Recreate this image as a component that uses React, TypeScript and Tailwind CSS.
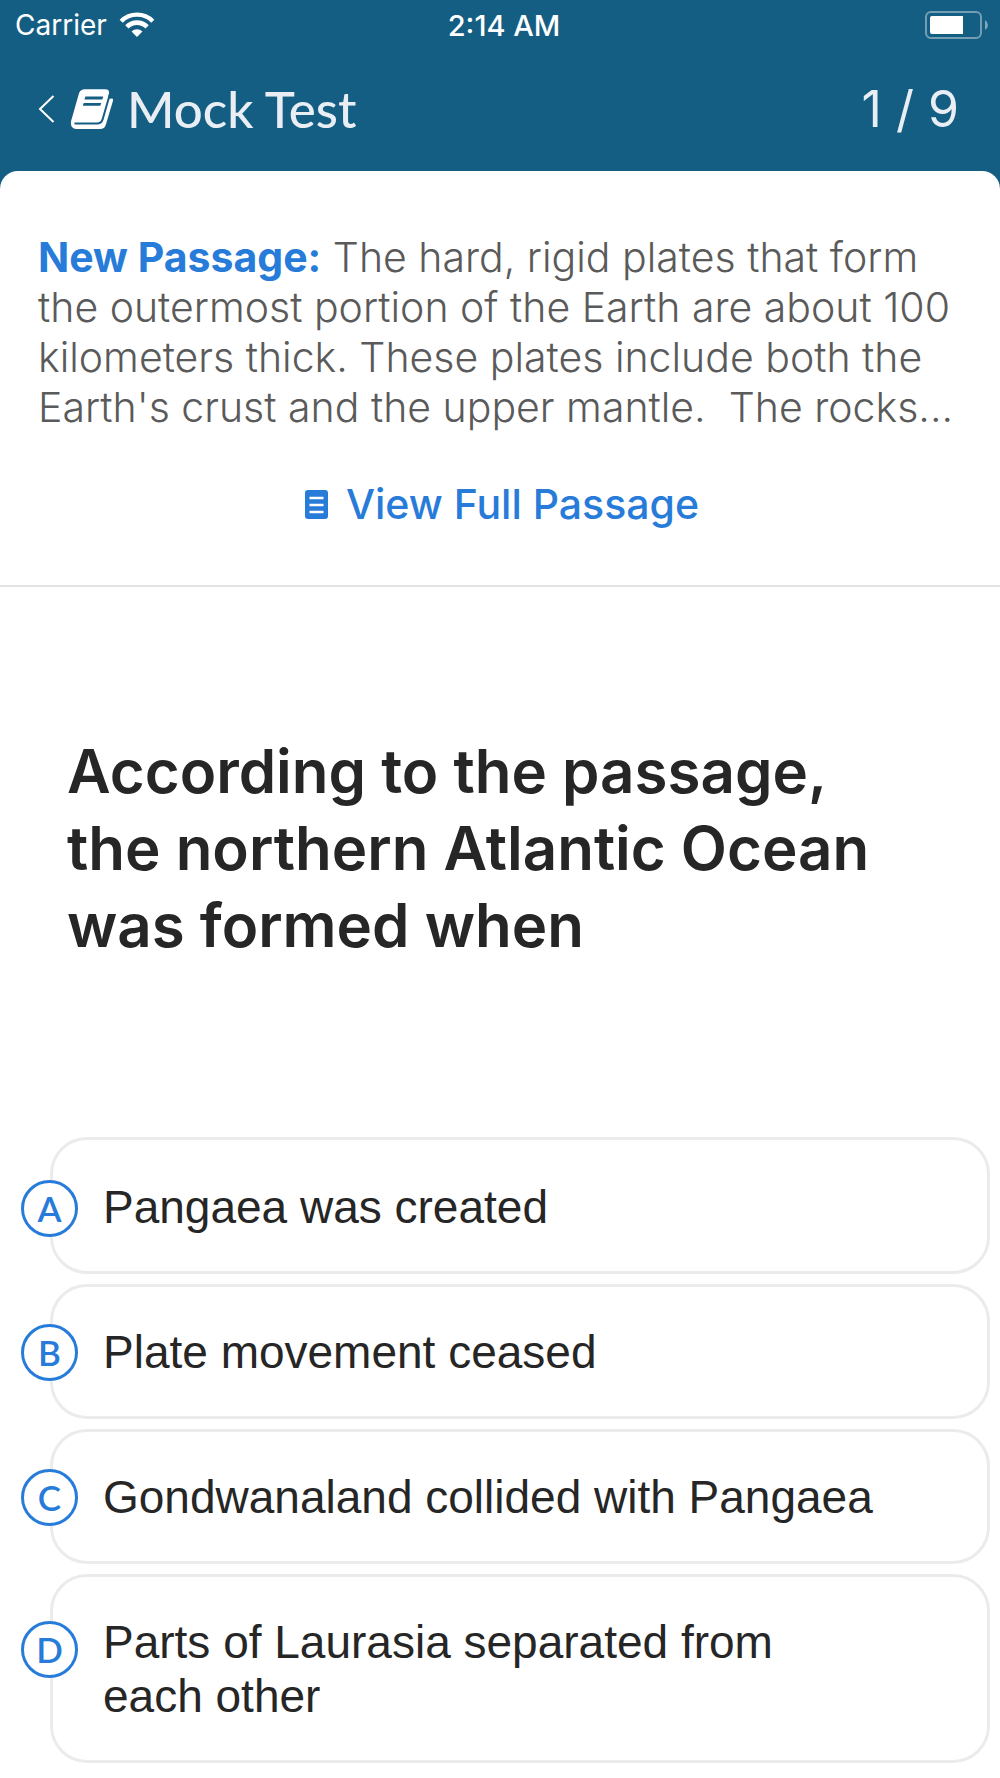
import React from "react";

type Option = { letter: string; text: string; badge: string; pad: string };

const options: Option[] = [
  { letter: "A", text: "Pangaea was created", badge: "top-10", pad: "pt-10" },
  { letter: "B", text: "Plate movement ceased", badge: "top-[37px]", pad: "pt-[38px]" },
  { letter: "C", text: "Gondwanaland collided with Pangaea", badge: "top-[37px]", pad: "pt-[38px]" },
  { letter: "D", text: "Parts of Laurasia separated from each other", badge: "top-11", pad: "pt-[38px]" },
];

function WifiIcon() {
  return (
    <svg viewBox="360 34 106 78" className="h-[26px] w-9" aria-hidden="true">
      <path d="M365.6 61.6A67 67 0 0 1 460.4 61.6" fill="none" stroke="white" strokeWidth="13" />
      <path d="M382.6 78.6A43 43 0 0 1 443.4 78.6" fill="none" stroke="white" strokeWidth="14" />
      <path d="M413 109L396.7 92.7A23 23 0 0 1 429.3 92.7Z" fill="white" />
    </svg>
  );
}

function BatteryIcon() {
  return (
    <svg viewBox="0 0 64 28" className="h-7 w-16" aria-hidden="true">
      <rect x="1" y="1" width="55" height="26" rx="5" fill="none" stroke="white" strokeOpacity="0.4" strokeWidth="2" />
      <path d="M7 5H38V23H7Q5 23 5 21V7Q5 5 7 5Z" fill="white" />
      <path d="M60 9Q63 11 63 14T60 19Z" fill="white" fillOpacity="0.45" />
    </svg>
  );
}

function BookIcon() {
  return (
    <svg viewBox="30 20 135 130" className="h-[43px] w-[45px]" aria-hidden="true">
      <path
        d="M57 38Q62 27 74 27H136Q150 27 147 41L145 50L150 56Q152 54 157 55Q161 57 159 63L138 133Q134 147 120 147H48Q29 145 33 122Z"
        fill="white"
      />
      <path d="M43 130H114Q124 130 128 118L150 42" fill="none" stroke="#155e83" strokeWidth="6" />
      <path d="M76 49H130L127 58H73ZM71 68H124L121 77H68Z" fill="#155e83" />
    </svg>
  );
}

function PageIcon() {
  return (
    <svg viewBox="0 0 23 29" className="h-[29px] w-[23px]" aria-hidden="true">
      <rect width="23" height="29" rx="3" fill="#277bd9" />
      <path d="M4.500 8H18.500M4.500 15H18.500M4.500 22H18.500" stroke="white" strokeWidth="2.5" />
    </svg>
  );
}

export default function App() {
  return (
    <div className="min-h-screen bg-[#155e83] font-['Inter',sans-serif]">
      <header className="pb-1 text-white">
        <div className="grid h-[50px] grid-cols-3 items-center pl-[15px] pr-[11px] text-[28px] leading-none">
          <div className="flex items-center gap-3">
            <span>Carrier</span>
            <WifiIcon />
          </div>
          <span className="pl-1 text-center text-[29px] font-medium leading-none">2:14 AM</span>
          <div className="flex justify-end">
            <BatteryIcon />
          </div>
        </div>
        <div className="flex h-[117px] items-center justify-between pl-[38px] pr-[41px]">
          <div className="flex items-center">
            <button type="button" aria-label="Back" className="mr-[15px]">
              <svg viewBox="0 0 17 28" className="h-7 w-[17px]" aria-hidden="true">
                <path d="M15.500 1L2 14L15.500 27" fill="none" stroke="white" strokeWidth="2" />
              </svg>
            </button>
            <BookIcon />
            <h1 className="ml-3 font-['Lato',sans-serif] text-[51px] font-medium leading-[60px] text-[#e8eef3]">
              Mock Test
            </h1>
          </div>
          <span className="text-[50px] font-normal leading-[60px] text-[#e8eef3]">1 / 9</span>
        </div>
      </header>

      <main className="rounded-t-[18px] bg-white">
        <section className="border-b-2 border-[#e2e2e2] px-[38px] pb-[56px] pt-[61px]">
          <p className="whitespace-pre-wrap text-[41px] font-light leading-[50px] text-[#5a5a5a]">
            <strong className="font-bold text-[#277bd9]">New Passage:</strong>
            {" The hard, rigid plates that form the outermost portion of the Earth are about 100 kilometers thick. These plates include both the Earth's crust and the upper mantle.  The rocks..."}
          </p>
          <div className="mt-[47px] flex justify-center">
            <button type="button" className="flex items-center gap-[18px] pl-1 text-[41px] font-medium leading-[50px] text-[#277bd9]">
              <PageIcon />
              View Full Passage
            </button>
          </div>
        </section>

        <h2 className="px-[67px] pb-[173px] pt-[146px] text-[60px] font-semibold leading-[77px] text-[#262626]">
          According to the passage, the northern Atlantic Ocean was formed when
        </h2>

        <ul className="flex flex-col gap-2.5 pb-[15px] pl-[50px] pr-2.5">
          {options.map((o) => (
            <li key={o.letter}>
              <button
                type="button"
                className={`relative block w-full rounded-[37px] border-[3px] border-[#ebebeb] bg-white pb-[37px] pl-[50px] pr-[108px] text-left ${o.pad}`}
              >
                <span
                  className={`absolute -left-8 flex size-[57px] items-center justify-center rounded-full border-[3px] border-[#277bd9] bg-white font-['Lato',sans-serif] text-[35px] font-semibold leading-none text-[#277bd9] ${o.badge}`}
                >
                  {o.letter}
                </span>
                <span className="block font-['Liberation_Sans',sans-serif] text-[46px] leading-[54px] text-[#262626]">
                  {o.text}
                </span>
              </button>
            </li>
          ))}
        </ul>
      </main>
    </div>
  );
}
